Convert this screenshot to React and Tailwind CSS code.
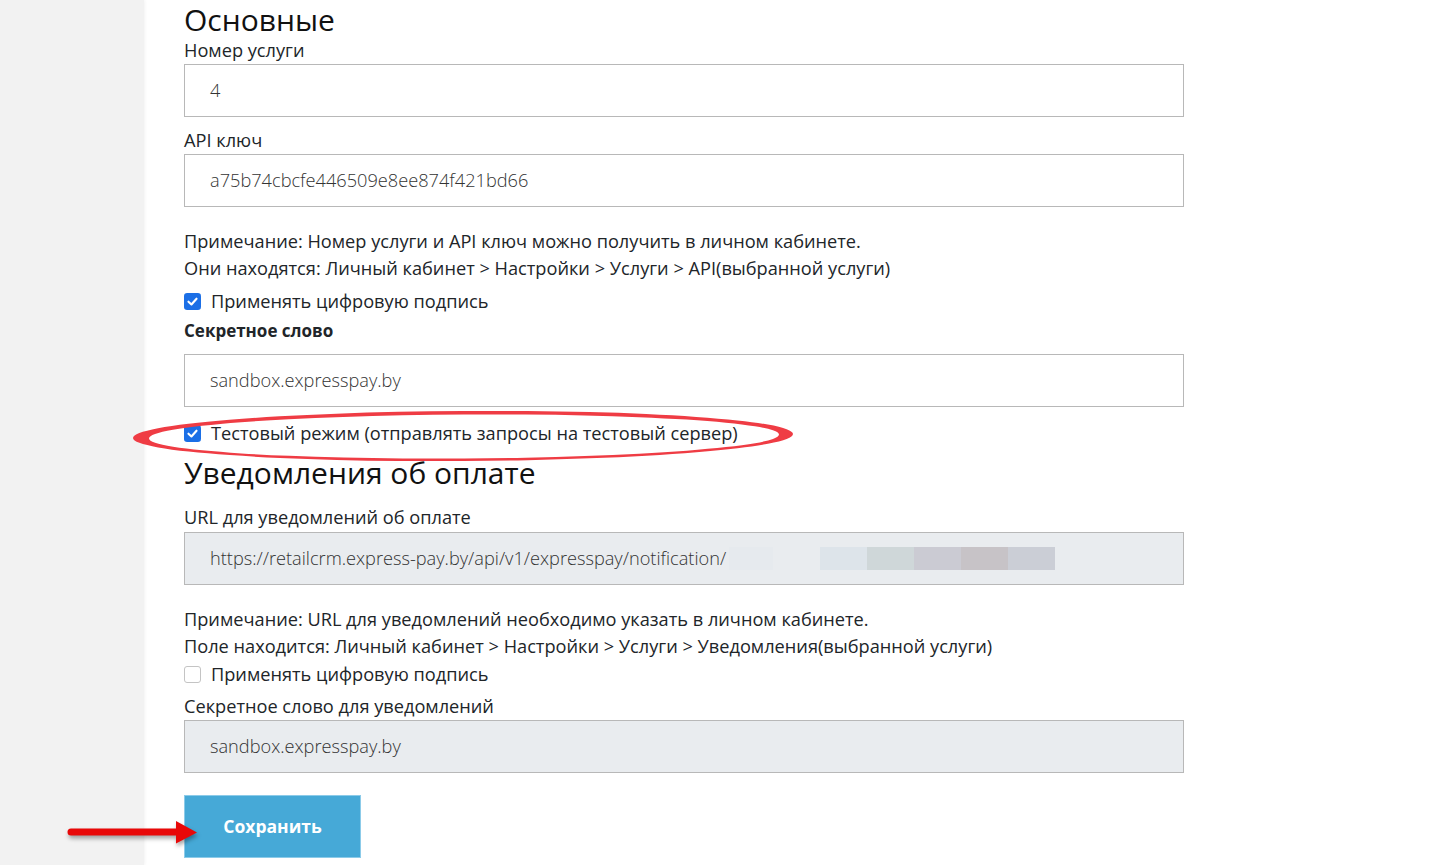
import React from "react";

function Checkbox({ checked }) {
  if (!checked) {
    return (
      <span className="w-[17px] h-[17px] shrink-0 rounded-[3px] border border-[#c4c4c4] bg-white" />
    );
  }
  return (
    <svg width="17" height="17" viewBox="0 0 16 16" className="shrink-0">
      <rect x="0" y="0" width="16" height="16" rx="3" fill="#1b6fe6" />
      <path d="M4.2 8.2 L7 10.8 L11.8 5.4" fill="none" stroke="#fff" strokeWidth="2" strokeLinecap="round" strokeLinejoin="round" />
    </svg>
  );
}

function Field({ value, disabled, children }) {
  return (
    <div
      className={
        "relative flex items-center h-[53px] border border-[#b8b8b8] pl-[25px] font-light text-[18.2px] text-[#333] " +
        (disabled ? "bg-[#e9ecef]" : "bg-white")
      }
    >
      {value}
      {children}
    </div>
  );
}

export default function App() {
  return (
    <div className="relative flex h-[865px] overflow-hidden bg-white font-['Open_Sans',sans-serif] text-[18.2px] text-[#212529]">
      <aside className="w-[144px] shrink-0 bg-[#f2f2f2] shadow-[1px_0_3px_rgba(0,0,0,0.05)]" />

      <main className="flex-1 pl-[40px]">
        <div className="w-[1000px]">
          {/* Основные */}
          <h2 className="mt-[3px] text-[30px] leading-[34px] text-[#111]">Основные</h2>
          <div className="leading-[27px]">Номер услуги</div>
          <Field value="4" />

          <div className="mt-[10px] leading-[27px]">API ключ</div>
          <Field value="a75b74cbcfe446509e8ee874f421bd66" />

          <div className="mt-[21px] leading-[27px]">
            <p>Примечание: Номер услуги и API ключ можно получить в личном кабинете.</p>
            <p>Они находятся: Личный кабинет &gt; Настройки &gt; Услуги &gt; API(выбранной услуги)</p>
          </div>

          <label className="mt-[6px] flex items-center gap-[10px] leading-[27px]">
            <Checkbox checked />
            <span>Применять цифровую подпись</span>
          </label>

          <div className="mt-[2px] font-bold text-[17px] leading-[27px]">Секретное слово</div>
          <div className="mt-[10px]">
            <Field value="sandbox.expresspay.by" />
          </div>

          <label className="mt-[13px] flex items-center gap-[10px] leading-[27px]">
            <Checkbox checked />
            <span>Тестовый режим (отправлять запросы на тестовый сервер)</span>
          </label>

          {/* Уведомления */}
          <h2 className="mt-[9px] text-[30px] leading-[34px] text-[#111]">Уведомления об оплате</h2>
          <div className="mt-[14px] leading-[27px]">URL для уведомлений об оплате</div>
          <div className="mt-[1px]">
            <Field value="https://retailcrm.express-pay.by/api/v1/expresspay/notification/" disabled>
              <div className="absolute left-[544px] top-[14px] h-[23px] w-[44px] bg-[#e6eaee]" />
              <div className="absolute left-[635px] top-[14px] flex h-[23px]">
                <span className="w-[47px] bg-[#dde4ea]" />
                <span className="w-[47px] bg-[#cfd7d9]" />
                <span className="w-[47px] bg-[#cbcbd3]" />
                <span className="w-[47px] bg-[#c7c3c7]" />
                <span className="w-[47px] bg-[#cbced6]" />
              </div>
            </Field>
          </div>

          <div className="mt-[21px] leading-[27px]">
            <p>Примечание: URL для уведомлений необходимо указать в личном кабинете.</p>
            <p>Поле находится: Личный кабинет &gt; Настройки &gt; Услуги &gt; Уведомления(выбранной услуги)</p>
          </div>

          <label className="mt-[1px] flex items-center gap-[10px] leading-[27px]">
            <Checkbox checked={false} />
            <span>Применять цифровую подпись</span>
          </label>

          <div className="mt-[5px] leading-[27px]">Секретное слово для уведомлений</div>
          <Field value="sandbox.expresspay.by" disabled />

          <button className="mt-[22px] flex h-[63px] w-[177px] items-center justify-center border border-[#8ccbe9] bg-[#46a9d7] font-bold text-[17.5px] text-white">
            Сохранить
          </button>
        </div>
      </main>

      {/* red annotation ellipse */}
      <svg
        className="pointer-events-none absolute left-0 top-0"
        width="1437"
        height="865"
        viewBox="0 0 1437 865"
      >
        <g transform="rotate(-0.35 463 436)">
          <path
            fillRule="evenodd"
            fill="#ef3c44"
            d="M133 436 A330 25 0 1 0 793 436 A330 25 0 1 0 133 436 Z M149 436.5 A315 22 0 1 0 779 436.5 A315 22 0 1 0 149 436.5 Z"
          />
        </g>
        {/* red annotation arrow */}
        <g style={{ filter: "drop-shadow(1px 3px 2px rgba(0,0,0,0.35))" }}>
          <line x1="71" y1="832" x2="182" y2="832" stroke="#e80808" strokeWidth="7" strokeLinecap="round" />
          <polygon points="176,821 197,832.5 176,843.5" fill="#e80808" />
        </g>
      </svg>
    </div>
  );
}
